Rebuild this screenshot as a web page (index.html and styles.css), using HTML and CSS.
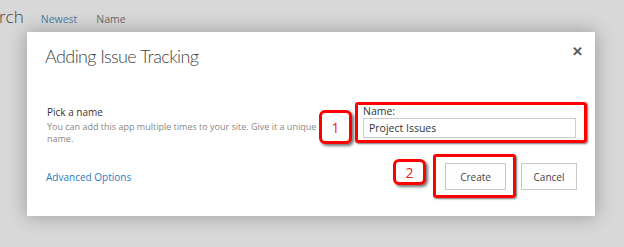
FILE: index.html
```html
<!DOCTYPE html>
<html lang="en">
<head>
  <meta charset="UTF-8">
  <title>Adding Issue Tracking</title>
  <link rel="stylesheet" href="styles.css">
</head>
<body>
  <div class="page">
    <!-- Page behind the dialog -->
    <div class="top-bar">
      <span class="search-label">rch</span>
      <a class="sort-link active">Newest</a>
      <a class="sort-link">Name</a>
    </div>

    <div class="dialog">
      <div class="dialog-header">
        <h1 class="dialog-title">Adding Issue Tracking</h1>
        <span class="close-btn">&#x2715;</span>
      </div>

      <div class="dialog-body">
        <div class="left-col">
          <div class="field-info">
            <div class="field-title">Pick a name</div>
            <div class="field-desc">You can add this app multiple times to your site. Give it a unique name.</div>
          </div>
          <a class="advanced-link">Advanced Options</a>
        </div>

        <div class="right-col">
          <div class="name-row">
            <div class="badge">1</div>
            <div class="mark name-mark">
              <label class="name-label" for="app-name">Name:</label>
              <input class="name-input" id="app-name" type="text" value="Project Issues">
            </div>
          </div>
          <div class="button-row">
            <div class="badge badge-two">2</div>
            <div class="mark create-mark">
              <button class="btn">Create</button>
            </div>
            <button class="btn cancel-btn">Cancel</button>
          </div>
        </div>
      </div>
    </div>
  </div>
</body>
</html>
```

FILE: styles.css
```css
* {
  box-sizing: border-box;
}
body {
  margin: 0;
  background-color: #d8d8d8;
  font-family: 'Open Sans', sans-serif;
}
.page {
  width: 624px;
  height: 247px;
  overflow: hidden;
}
.top-bar {
  height: 32px;
  display: flex;
  align-items: baseline;
  padding-top: 5px;
}
.search-label {
  font-size: 17px;
  font-weight: 300;
  color: #444;
  margin-right: 17px;
  margin-left: -1px;
}
.sort-link {
  font-size: 10.5px;
  color: #666;
  margin-right: 19px;
}
.sort-link.active {
  color: #4a78a8;
}
.dialog {
  margin-left: 27px;
  width: 568px;
  height: 184px;
  background-color: #fff;
  box-shadow: 0 0 18px rgba(0, 0, 0, 0.3);
  padding: 0 18px 0 18px;
}
.dialog-header {
  display: flex;
  justify-content: space-between;
  align-items: center;
  height: 50px;
}
.dialog-title {
  margin: 0;
  margin-top: -3px;
  font-family: 'Lato', sans-serif;
  font-size: 18px;
  font-weight: 300;
  letter-spacing: -0.6px;
  color: #444;
}
.close-btn {
  font-size: 13px;
  font-weight: bold;
  color: #555;
  margin-right: -6px;
  margin-top: -12px;
}
.dialog-body {
  display: flex;
  justify-content: space-between;
  padding-top: 20px;
}
.left-col {
  width: 275px;
  display: flex;
  flex-direction: column;
  padding-left: 2px;
}
.field-info {
  padding-top: 3px;
}
.field-title {
  font-size: 10px;
  color: #333;
}
.field-desc {
  font-size: 9px;
  color: #888;
  line-height: 12px;
  margin-top: 2px;
  margin-right: -20px;
}
.advanced-link {
  font-size: 10px;
  color: #2b7bbf;
  margin-left: -1px;
  margin-top: 25px;
}
.right-col {
  width: 267px;
  margin-right: -10px;
  display: flex;
  flex-direction: column;
  align-items: flex-end;
}
.name-row {
  display: flex;
  align-items: flex-start;
  gap: 3px;
}
.mark {
  border: 3px solid #f00;
  border-radius: 3px;
  box-shadow: 1px 1px 2px rgba(0, 0, 0, 0.55);
}
.name-mark {
  width: 232px;
  padding: 0 8px 2px 5px;
}
.name-label {
  display: block;
  font-size: 10.5px;
  color: #333;
  line-height: 13px;
}
.name-input {
  display: block;
  width: 100%;
  height: 20px;
  border: 1px solid #ccc;
  padding: 0 5px;
  font-family: 'Open Sans', sans-serif;
  font-size: 10.5px;
  color: #333;
  outline: none;
}
.badge {
  width: 33px;
  height: 34px;
  margin-top: 8px;
  border: 3px solid #f00;
  border-radius: 6px;
  background-color: #fff;
  box-shadow: 2px 2px 3px rgba(0, 0, 0, 0.55);
  color: #e22;
  font-size: 14px;
  display: flex;
  align-items: center;
  justify-content: center;
}
.button-row {
  display: flex;
  align-items: flex-start;
  margin-top: 10px;
  margin-right: 10px;
}
.badge-two {
  margin-top: 5px;
  height: 26px;
  width: 33px;
  margin-right: 7px;
}
.create-mark {
  width: 83px;
  height: 44px;
  padding: 6px 8px 0 9px;
}
.btn {
  width: 61px;
  height: 27px;
  border: 1px solid #c8c8c8;
  background-color: #fdfdfd;
  font-family: 'Open Sans', sans-serif;
  font-size: 10px;
  color: #444;
  padding: 0;
}
.cancel-btn {
  width: 56px;
  margin-top: 9px;
  margin-left: 5px;
}
```
